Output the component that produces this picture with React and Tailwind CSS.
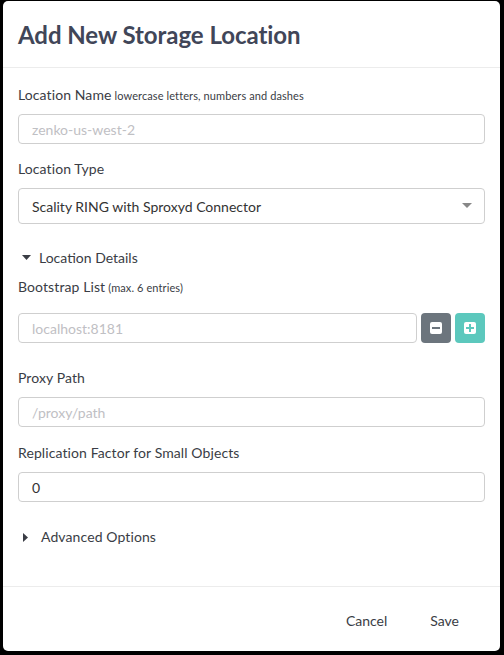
import React from "react";

const font = { fontFamily: "Lato, 'Open Sans', sans-serif" };

function Field({ placeholder, value, className = "" }) {
  return (
    <div
      className={`h-[30px] border border-[#cfcfcf] rounded-[4px] flex items-center px-[13px] text-[14px] ${value ? "text-[#333]" : "text-[#bfc0c4]"} ${className}`}
    >
      {value || placeholder}
    </div>
  );
}

function Label({ children, small }) {
  return (
    <div className="text-[14px] text-[#3a3d45] leading-[18px] tracking-[0.1px]">
      {children}
      {small && <span className="text-[11px] ml-[3px]">{small}</span>}
    </div>
  );
}

export default function App() {
  return (
    <div className="w-[504px] h-[655px] bg-black pl-[3px] pt-[1px] pr-[4px] pb-[4px]" style={font}>
      <div className="bg-white rounded-[5px] h-full flex flex-col">
        <div className="h-[67px] border-b border-[#ececec] flex items-center px-[15px] pt-[2px]">
          <div className="text-[24px] font-bold text-[#414658] tracking-[-0.05px]">Add New Storage Location</div>
        </div>
        <div className="flex-1 px-[15px] flex flex-col">
          <div className="mt-[18px]">
            <Label small="lowercase letters, numbers and dashes">Location Name</Label>
          </div>
          <Field className="mt-[9px]" placeholder="zenko-us-west-2" />

          <div className="mt-[16px]">
            <Label>Location Type</Label>
          </div>
          <div className="mt-[10px] h-[36px] border border-[#cfcfcf] rounded-[4px] flex items-center justify-between px-[13px] text-[14px] text-[#333]">
            <span>Scality RING with Sproxyd Connector</span>
            <svg width="10" height="6" viewBox="0 0 10 6" className="mr-[-1px]">
              <path d="M0 0 L10 0 L5 5 Z" fill="#888" />
            </svg>
          </div>

          <div className="mt-[25px] flex items-center text-[14px] text-[#3a3d45] leading-[18px] pl-[4px]">
            <svg width="9" height="6" viewBox="0 0 9 6" className="mr-[8px]">
              <path d="M0 0 L9 0 L4.5 5 Z" fill="#3a3d45" />
            </svg>
            Location Details
          </div>
          <div className="mt-[11px]">
            <Label small="(max. 6 entries)">Bootstrap List</Label>
          </div>
          <div className="mt-[16px] flex gap-[4px]">
            <Field className="flex-1" placeholder="localhost:8181" />
            <div className="w-[30px] h-[30px] rounded-[4px] bg-[#6c757d] flex items-center justify-center">
              <div className="w-[12px] h-[12px] bg-white rounded-[2px] flex items-center justify-center">
                <div className="w-[8px] h-[2px] bg-[#6c757d]" />
              </div>
            </div>
            <div className="w-[30px] h-[30px] rounded-[4px] bg-[#5cc8bd] flex items-center justify-center">
              <div className="w-[12px] h-[12px] bg-white rounded-[2px] relative">
                <div className="absolute left-[2px] top-[5px] w-[8px] h-[2px] bg-[#5cc8bd]" />
                <div className="absolute left-[5px] top-[2px] w-[2px] h-[8px] bg-[#5cc8bd]" />
              </div>
            </div>
          </div>

          <div className="mt-[26px]">
            <Label>Proxy Path</Label>
          </div>
          <Field className="mt-[10px]" placeholder="/proxy/path" />

          <div className="mt-[17px]">
            <Label>Replication Factor for Small Objects</Label>
          </div>
          <Field className="mt-[10px]" value="0" />

          <div className="mt-[26px] flex items-center text-[14px] text-[#3a3d45] leading-[18px] pl-[5px] tracking-[0.1px]">
            <svg width="6" height="9" viewBox="0 0 6 9" className="mr-[12px]">
              <path d="M0 0 L5 4.5 L0 9 Z" fill="#3a3d45" />
            </svg>
            Advanced Options
          </div>
        </div>
        <div className="h-[65px] border-t border-[#ececec] flex items-center justify-end pr-[41px] gap-[43px] text-[14px] text-[#3a3d45] pt-[2px]">
          <span>Cancel</span>
          <span>Save</span>
        </div>
      </div>
    </div>
  );
}
